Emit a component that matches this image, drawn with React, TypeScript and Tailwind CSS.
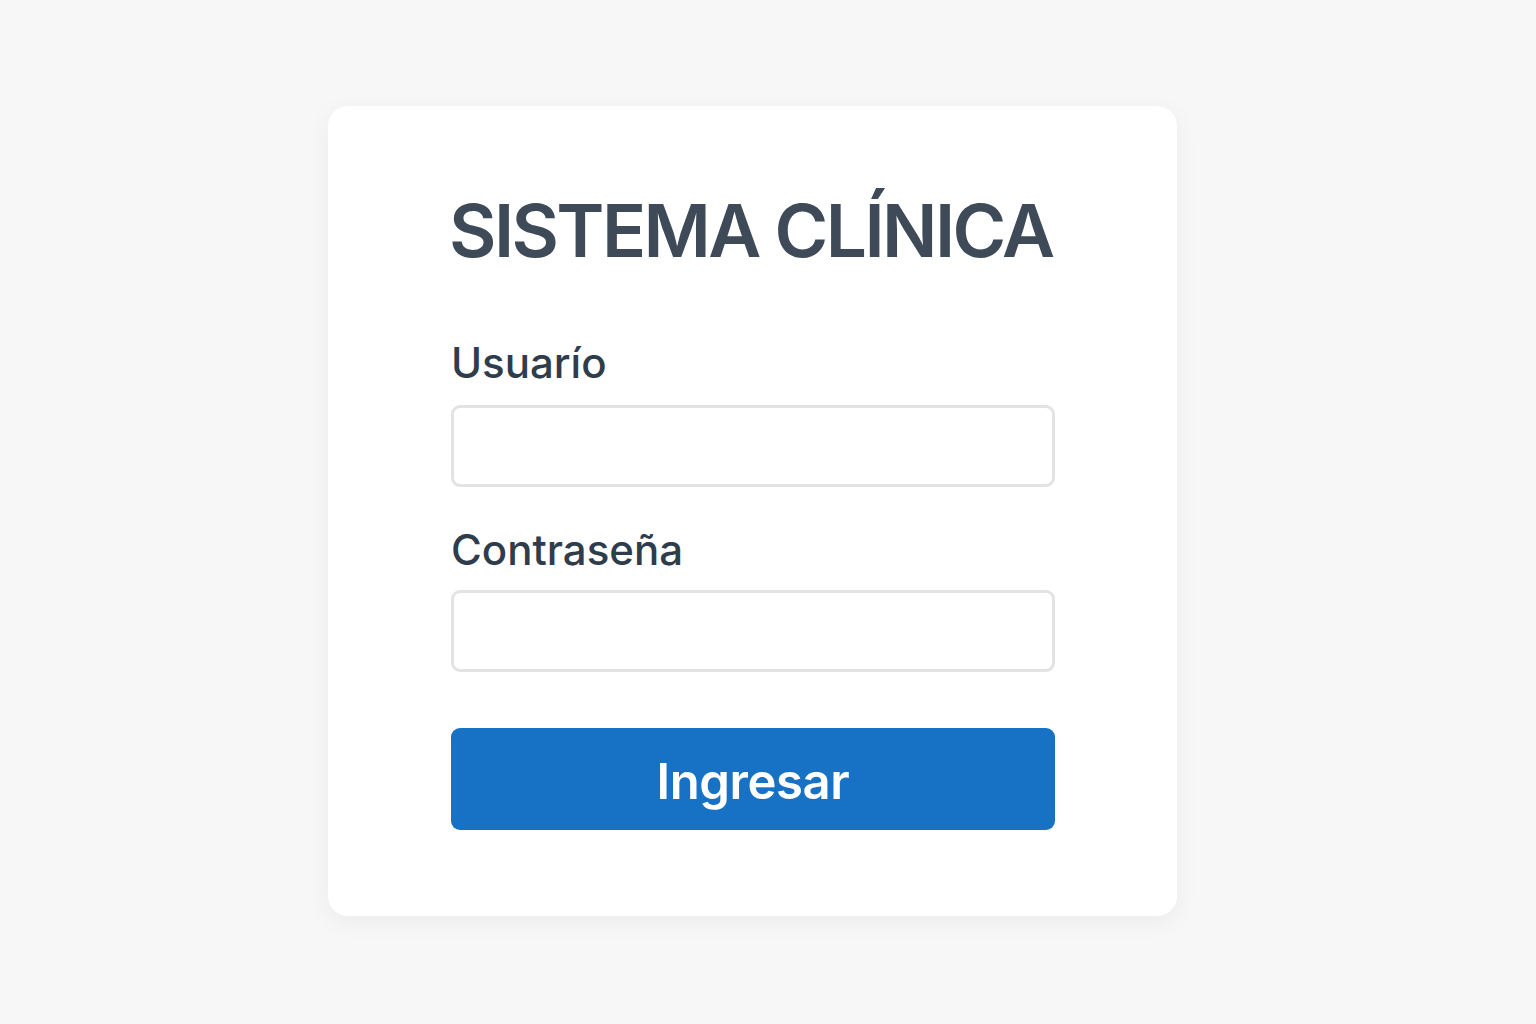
import React from "react";

export default function App() {
  return (
    <div className="min-h-screen w-full bg-[#f7f7f7] flex justify-start pl-[328px] pt-[106px]" style={{ fontFamily: "Inter, 'Noto Sans', sans-serif" }}>
      <div className="w-[849px] h-[810px] rounded-[20px] bg-white shadow-[0_6px_24px_rgba(0,0,0,0.05)] pl-[123px] pr-[122px] pt-[88px] flex flex-col">
        <h1 className="text-[73px] leading-[73px] font-semibold text-[#3e4a58] tracking-[-2.6px] whitespace-nowrap -ml-[2px]">
          SISTEMA CLÍNICA
        </h1>
        <label className="mt-[75px] text-[42px] leading-[42px] font-medium text-[#2f3c4b]">Usuarío</label>
        <input type="text" className="mt-[21px] h-[82px] w-full rounded-[9px] border-[3px] border-[#e2e3e5] bg-white outline-none" />
        <label className="mt-[42px] text-[42px] leading-[42px] font-medium text-[#2f3c4b]">Contraseña</label>
        <input type="password" className="mt-[19px] h-[82px] w-full rounded-[9px] border-[3px] border-[#e2e3e5] bg-white outline-none" />
        <button className="mt-[56px] h-[102px] w-full rounded-[9px] bg-[#1772c6] text-white text-[49px] leading-none font-semibold tracking-[-0.4px] pt-[5px]">
          Ingresar
        </button>
      </div>
    </div>
  );
}
